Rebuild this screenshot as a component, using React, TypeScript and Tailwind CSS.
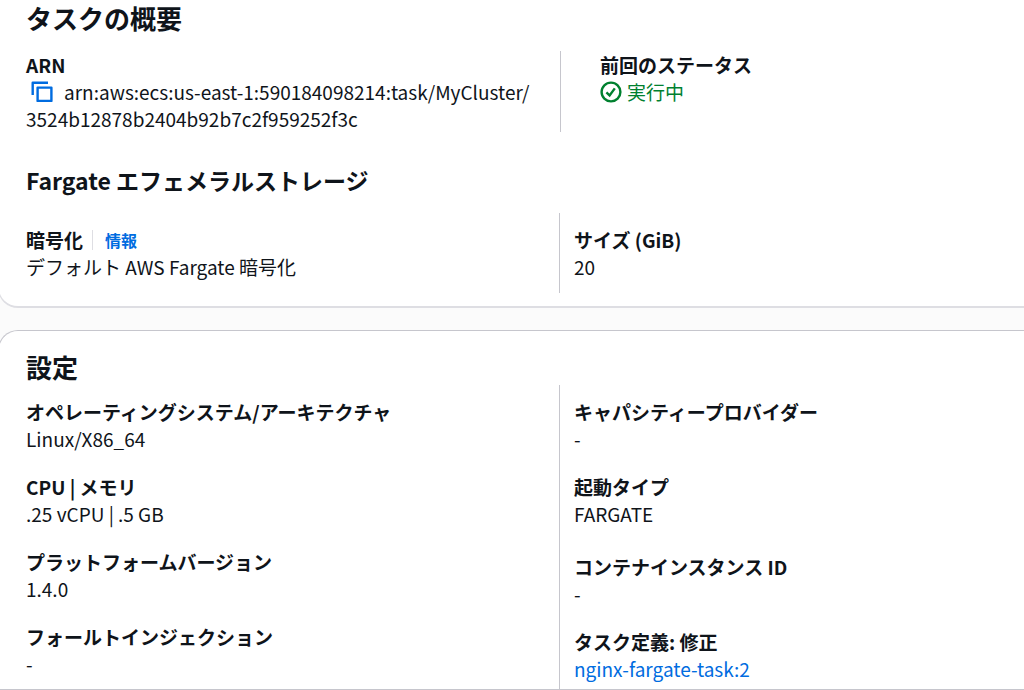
import type { ReactNode } from 'react';

function CopyIcon() {
  return (
    <svg width="22" height="22" viewBox="0 0 22 22" fill="none" stroke="#006ce0" strokeWidth="2.4" strokeLinejoin="round">
      <path d="M1.7 14V1.7H17" />
      <rect x="6.6" y="6.6" width="13.8" height="13.3" />
    </svg>
  );
}

function CheckIcon() {
  return (
    <svg width="22" height="22" viewBox="0 0 22 22" fill="none" stroke="#00802f" strokeWidth="2.4">
      <circle cx="11" cy="11" r="9.4" />
      <path d="M6.4 11.4l3.2 3 5.2-7" />
    </svg>
  );
}

function Field({ label, children }: { label: ReactNode; children: ReactNode }) {
  return (
    <div>
      <dt className="font-bold">{label}</dt>
      <dd>{children}</dd>
    </div>
  );
}

export default function App() {
  return (
    <div
      lang="ja"
      className="overflow-x-hidden border-b border-[#c6c6cd] bg-[#fbfbfb] text-[19px] leading-[27px] text-[#0f141a] [font-family:'Noto_Sans_CJK_JP',sans-serif]"
    >
      <section className="-ml-0.5 rounded-bl-[20px] border-b-2 border-l border-[#dedee3] bg-white pb-[13px] pl-[27px]">
        <h2 className="text-[26px] leading-9 font-bold">タスクの概要</h2>
        <dl className="mt-[15px] grid grid-cols-[534fr_464fr]">
          <Field label="ARN">
            <button type="button" aria-label="ARN をコピー" className="-mt-1 mr-[11px] mb-0.5 ml-[5px] inline-block align-middle">
              <CopyIcon />
            </button>
            arn:aws:ecs:us-east-1:590184098214:task/MyCluster/
            <br />
            3524b12878b2404b92b7c2f959252f3c
          </Field>
          <div className="border-l border-[#c6c6cd] pl-[39px]">
            <Field label="前回のステータス">
              <span className="flex items-center gap-[5px] text-[#00802f]">
                <CheckIcon />
                実行中
              </span>
            </Field>
          </div>
        </dl>

        <h3 className="mt-[30px] text-[23px] leading-9 font-bold">Fargate エフェメラルストレージ</h3>
        <dl className="mt-[15px] grid grid-cols-[533fr_465fr]">
          <div className="py-[13px]">
            <Field
              label={
                <span className="flex items-center">
                  暗号化
                  <a href="#info" className="ml-[9px] border-l border-[#dedee3] pl-3 text-[16px] leading-5 text-[#006ce0]">
                    情報
                  </a>
                </span>
              }
            >
              デフォルト AWS Fargate 暗号化
            </Field>
          </div>
          <div className="border-l border-[#c6c6cd] py-[13px] pl-3.5">
            <Field label="サイズ (GiB)">20</Field>
          </div>
        </dl>
      </section>

      <section className="-ml-0.5 mt-[22px] rounded-tl-[20px] border-t border-l border-[#c6c6cd] bg-white pt-[18px] pl-[27px]">
        <h2 className="text-[26px] leading-9 font-bold">設定</h2>
        <div className="grid grid-cols-[533fr_465fr]">
          <dl className="flex flex-col gap-[21px] pt-[13px] pb-2.5">
            <Field label="オペレーティングシステム/アーキテクチャ">Linux/X86_64</Field>
            <Field label="CPU | メモリ">.25 vCPU | .5 GB</Field>
            <Field label="プラットフォームバージョン">1.4.0</Field>
            <Field label="フォールトインジェクション">-</Field>
          </dl>
          <div className="border-l border-[#c6c6cd] pt-[13px] pb-[7px] pl-3.5">
            <dl className="flex flex-col gap-[21px]">
              <Field label="キャパシティープロバイダー">-</Field>
              <Field label="起動タイプ">FARGATE</Field>
            </dl>
            <dl className="mt-[26px] flex flex-col gap-[21px]">
              <Field label="コンテナインスタンス ID">-</Field>
              <Field label="タスク定義: 修正">
                <a href="#task-definition" className="text-[#006ce0]">
                  nginx-fargate-task:2
                </a>
              </Field>
            </dl>
          </div>
        </div>
      </section>
    </div>
  );
}
